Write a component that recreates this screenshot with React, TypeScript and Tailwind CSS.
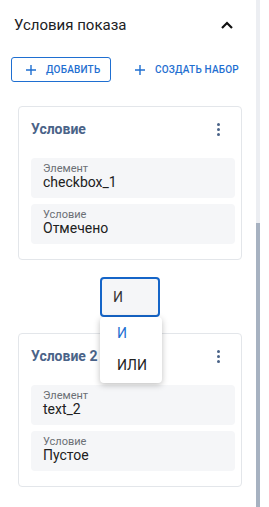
import React, { useState } from "react";

type Cond = { title: string; element: string; condition: string };

const CONDITIONS: Cond[] = [
  { title: "Условие", element: "checkbox_1", condition: "Отмечено" },
  { title: "Условие 2", element: "text_2", condition: "Пустое" },
];

function Plus() {
  return (
    <svg width="10" height="10" viewBox="0 0 10 10" className="shrink-0">
      <path d="M5 0v10M0 5h10" stroke="currentColor" strokeWidth="1.4" />
    </svg>
  );
}

function Kebab() {
  return (
    <div className="flex w-3 flex-col items-center gap-[2px]">
      <span className="h-[3px] w-[3px] rounded-full bg-[#4a6388]" />
      <span className="h-[3px] w-[3px] rounded-full bg-[#4a6388]" />
      <span className="h-[3px] w-[3px] rounded-full bg-[#4a6388]" />
    </div>
  );
}

function Field({ label, value }: { label: string; value: string }) {
  return (
    <div className="h-10 rounded-[4px] bg-[#f5f6f8] pl-3 pt-[5px]">
      <div className="text-[11px] leading-[12px] text-[#6b6f75]">{label}</div>
      <div className="text-[14px] leading-[15px] text-[#212121]">{value}</div>
    </div>
  );
}

function ConditionCard({ item }: { item: Cond }) {
  return (
    <div className="rounded-[4px] border border-[#e3e6ea] bg-white pb-[15px] pl-3 pr-1.5 pt-[13px]">
      <div className="mr-[11px] flex h-[18px] items-center justify-between">
        <span className="text-[14px] font-bold leading-[18px] text-[#4a6388]">{item.title}</span>
        <Kebab />
      </div>
      <div className="mt-[20px] flex flex-col gap-1.5">
        <Field label="Элемент" value={item.element} />
        <Field label="Условие" value={item.condition} />
      </div>
    </div>
  );
}

export default function App() {
  const [op] = useState("И");

  return (
    <div className="flex h-[507px] w-[269px] overflow-hidden bg-white font-['Roboto',sans-serif]">
      {/* Content */}
      <div className="w-[256px] shrink-0">
        {/* Header */}
        <div className="mt-[14px] flex h-[22px] items-center justify-between pl-[14px] pr-[23px]">
          <span className="text-[15px] leading-[22px] text-[#202124]">Условия показа</span>
          <svg width="12" height="8" viewBox="0 0 12 8">
            <path d="M1 7L6 2L11 7" fill="none" stroke="#111" strokeWidth="2.2" />
          </svg>
        </div>

        {/* Actions */}
        <div className="mt-[21px] flex items-center pl-[11px]">
          <button className="flex h-[25px] w-[100px] items-center gap-[10px] rounded-[3px] border border-[#1f6fd1] pl-[14px] text-[10px] font-medium tracking-[0.2px] text-[#1f6fd1]">
            <Plus />
            <span>ДОБАВИТЬ</span>
          </button>
          <button className="ml-[24px] flex items-center gap-[10px] text-[10px] font-medium tracking-[0.2px] text-[#1f6fd1]">
            <Plus />
            <span>СОЗДАТЬ НАБОР</span>
          </button>
        </div>

        {/* Conditions */}
        <div className="ml-[18px] mt-[24px] w-[224px]">
          <ConditionCard item={CONDITIONS[0]} />

          <div className="flex justify-center pb-4 pt-[17px]">
            <div className="relative">
              <div className="flex h-10 w-[60px] items-center rounded-[4px] border-2 border-[#1565c8] bg-[#f5f6f8] pl-[11px] text-[14px] text-[#333]">
                {op}
              </div>
              <div className="absolute left-0 top-full z-10 w-[62px] rounded-[4px] bg-white pb-[2px] shadow-[0_2px_6px_rgba(0,0,0,0.25)]">
                <div className="flex h-[32px] items-center pl-[17px] text-[14px] text-[#1f6fd1]">И</div>
                <div className="flex h-[32px] items-center pl-[17px] text-[14px] text-[#222]">ИЛИ</div>
              </div>
            </div>
          </div>

          <ConditionCard item={CONDITIONS[1]} />
        </div>
      </div>

      {/* Scrollbar */}
      <div className="flex w-[4px] shrink-0 flex-col bg-[#eceef2]">
        <div className="h-[223px]" />
        <div className="flex-1 bg-[#a7b2c1]" />
      </div>
      <div className="flex-1" />
    </div>
  );
}
